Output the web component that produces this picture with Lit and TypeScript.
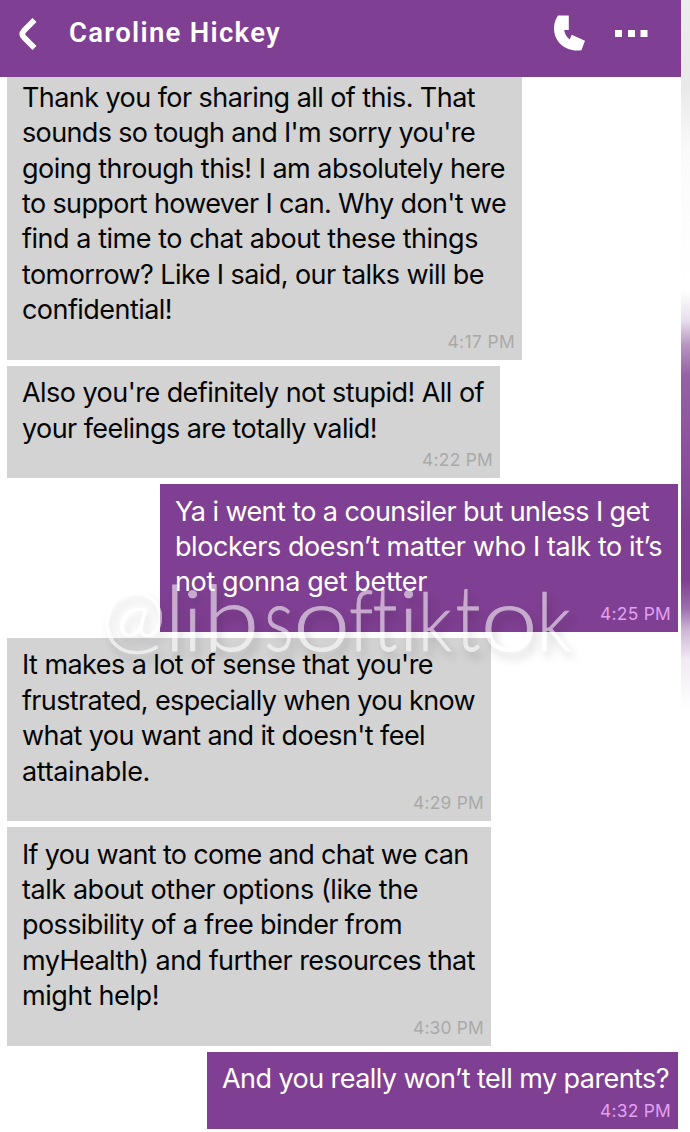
import { LitElement, html, svg, css } from "lit";
import { customElement, property } from "lit/decorators.js";

type Line = [text: string, width: number];

interface Message {
  mine: boolean;
  width: number;
  time: string;
  timeWidth: number;
  lines: Line[];
}

const MESSAGES: Message[] = [
  {
    mine: false,
    width: 515,
    time: "4:17 PM",
    timeWidth: 67.5,
    lines: [
      ["Thank you for sharing all of this. That", 453],
      ["sounds so tough and I'm sorry you're", 453],
      ["going through this! I am absolutely here", 483],
      ["to support however I can. Why don't we", 484],
      ["find a time to chat about these things", 456],
      ["tomorrow? Like I said, our talks will be", 462],
      ["confidential!", 150],
    ],
  },
  {
    mine: false,
    width: 493,
    time: "4:22 PM",
    timeWidth: 71,
    lines: [
      ["Also you're definitely not stupid! All of", 462],
      ["your feelings are totally valid!", 355],
    ],
  },
  {
    mine: true,
    width: 518,
    time: "4:25 PM",
    timeWidth: 71,
    lines: [
      ["Ya i went to a counsiler but unless I get", 474],
      ["blockers doesn’t matter who I talk to it’s", 487],
      ["not gonna get better", 252],
    ],
  },
  {
    mine: false,
    width: 484,
    time: "4:29 PM",
    timeWidth: 71,
    lines: [
      ["It makes a lot of sense that you're", 411],
      ["frustrated, especially when you know", 453],
      ["what you want and it doesn't feel", 403],
      ["attainable.", 128],
    ],
  },
  {
    mine: false,
    width: 484,
    time: "4:30 PM",
    timeWidth: 71,
    lines: [
      ["If you want to come and chat we can", 446.5],
      ["talk about other options (like the", 396],
      ["possibility of a free binder from", 380],
      ["myHealth) and further resources that", 453],
      ["might help!", 137],
    ],
  },
  {
    mine: true,
    width: 471,
    time: "4:32 PM",
    timeWidth: 71,
    lines: [["And you really won’t tell my parents?", 447]],
  },
];

/** Watermark letters: glyph, centre x, baseline y, horizontal and vertical stretch. */
const MARK: [string, number, number, number, number][] = [
  ["@", 43.5, 85, 0.86, 0.86],
  ["l", 84.7, 91, 1, 0.99],
  ["i", 102.7, 91, 1, 0.93],
  ["b", 141, 91, 1.13, 0.99],
  ["s", 189, 91, 0.76, 0.98],
  ["o", 231.7, 91, 1.13, 0.98],
  ["f", 271, 91, 0.78, 0.94],
  ["t", 295, 91, 0.8, 1],
  ["i", 318.700, 91, 1, 0.93],
  ["k", 345, 91, 0.78, 0.89],
  ["t", 378, 91, 0.8, 1],
  ["o", 419.3, 91, 1.13, 0.98],
  ["k", 464, 91, 0.78, 0.89],
];

/** One line of text whose tracking is tuned to a given measure. */
@customElement("fit-text")
class FitText extends LitElement {
  @property() text = "";
  @property({ type: Number }) measure = 0;

  static styles = css`
    :host {
      display: block;
      white-space: nowrap;
    }
    .run {
      display: inline-block;
    }
  `;

  updated() {
    const run = this.renderRoot.querySelector<HTMLElement>(".run")!;
    run.style.letterSpacing = "0px";
    const natural = run.getBoundingClientRect().width;
    run.style.letterSpacing = `${(this.measure - natural) / this.text.length}px`;
  }

  render() {
    return html`<span class="run">${this.text}</span>`;
  }
}

@customElement("chat-bubble")
class ChatBubble extends LitElement {
  @property({ attribute: false }) message!: Message;

  static styles = css`
    :host {
      display: block;
    }
    .bubble {
      box-sizing: border-box;
      display: flex;
      flex-direction: column;
      padding: 9.3px 7px 3.9px 15px;
      background: #d3d3d3;
      color: #050505;
    }
    .mine {
      margin-left: auto;
      background: #7f3f92;
      color: #fff;
    }
    .line {
      font-size: 27px;
      line-height: 35.4px;
    }
    .time {
      align-self: flex-end;
      font-size: 17.4px;
      line-height: 28px;
      height: 28px;
      color: #a9a9a9;
    }
    .mine .time {
      color: #e3a0f5;
    }
  `;

  render() {
    const m = this.message;
    return html`<div class="bubble ${m.mine ? "mine" : ""}" style="width:${m.width}px">
      ${m.lines.map(([t, w]) => html`<fit-text class="line" .text=${t} .measure=${w}></fit-text>`)}
      <fit-text class="time" .text=${m.time} .measure=${m.timeWidth}></fit-text>
    </div>`;
  }
}

@customElement("app-root")
class AppRoot extends LitElement {
  static styles = css`
    :host {
      display: block;
      position: relative;
      width: 690px;
      height: 1132px;
      overflow: hidden;
      background: #fff;
      font-family: Inter, "Liberation Sans", sans-serif;
    }
    .page {
      display: grid;
      grid-template-columns: 681px 9px;
      height: 100%;
    }
    .chat {
      display: flex;
      flex-direction: column;
      min-width: 0;
    }
    .header {
      box-sizing: border-box;
      display: flex;
      align-items: center;
      flex: none;
      height: 76.5px;
      padding: 0 33px 10px 19px;
      background: #7f3f92;
      color: #fff;
      z-index: 1;
    }
    .title {
      margin-left: 31px;
      flex: 1;
      font-family: Roboto, sans-serif;
      font-size: 27.5px;
      font-weight: 600;
      line-height: 36px;
    }
    .back {
      margin-top: 1px;
    }
    .phone {
      margin-right: 30px;
    }
    svg {
      display: block;
      flex: none;
    }
    .list {
      display: flex;
      flex-direction: column;
      gap: 6.4px;
      margin-top: -6px;
      padding: 0 3px 0 7px;
    }
    .edge {
      background: linear-gradient(
        #ececec 0,
        #e9e9e9 85px,
        #fafafa 150px,
        #fff 290px,
        #e9dfec 320px,
        #b795c1 345px,
        #9562a5 375px,
        #8b4f9d 460px,
        #7f3f92 530px,
        #7f3f92 580px,
        #9c6dac 608px,
        #cdb6d5 630px,
        #f1ebf4 660px,
        #fff 710px
      );
    }
    .watermark {
      position: absolute;
      left: 90px;
      top: 560px;
      overflow: visible;
      font-family: Lato, sans-serif;
      font-size: 91px;
      font-weight: 300;
      text-anchor: middle;
      fill: #fff;
      stroke: #fff;
      stroke-width: 0.8;
      opacity: 0.56;
      filter: drop-shadow(4px 7px 5px rgba(0, 0, 0, 0.28));
    }
  `;

  render() {
    return html`
      <div class="page">
        <div class="chat">
          <div class="header">
            <svg class="back" width="19" height="32" viewBox="0 0 19 32" fill="none" stroke="#fff" stroke-width="5.6">
              <path d="M15.5 2 L4.8 12.8 Q1.8 16 4.8 19.2 L15.5 30" />
            </svg>
            <fit-text class="title" .text=${"Caroline Hickey"} .measure=${212}></fit-text>
            <svg class="phone" width="31" height="36" viewBox="0 0 31 36" fill="#fff">
              <path d="M4 0.5H14.8V15H10.2C10.8 19 13 22.5 15.7 24.4L17.7 19.8L31 25.8L27.4 35.3C11.5 37.5 0 26.5 0 13.5C0 8.5 1.7 3.8 4 0.5Z" />
            </svg>
            <svg width="33" height="7" viewBox="0 0 33 7" fill="#fff">
              <path d="M0 0H7V7H0ZM13 0H20V7H13ZM25.5 0H32.5V7H25.5Z" />
            </svg>
          </div>
          <div class="list">${MESSAGES.map((m) => html`<chat-bubble .message=${m}></chat-bubble>`)}</div>
        </div>
        <div class="edge"></div>
      </div>
      <svg class="watermark" width="500" height="110">${MARK.map(
        ([c, x, y, sx, sy]) => svg`<text transform="translate(${x} ${y}) scale(${sx} ${sy})">${c}</text>`
      )}</svg>
    `;
  }
}
